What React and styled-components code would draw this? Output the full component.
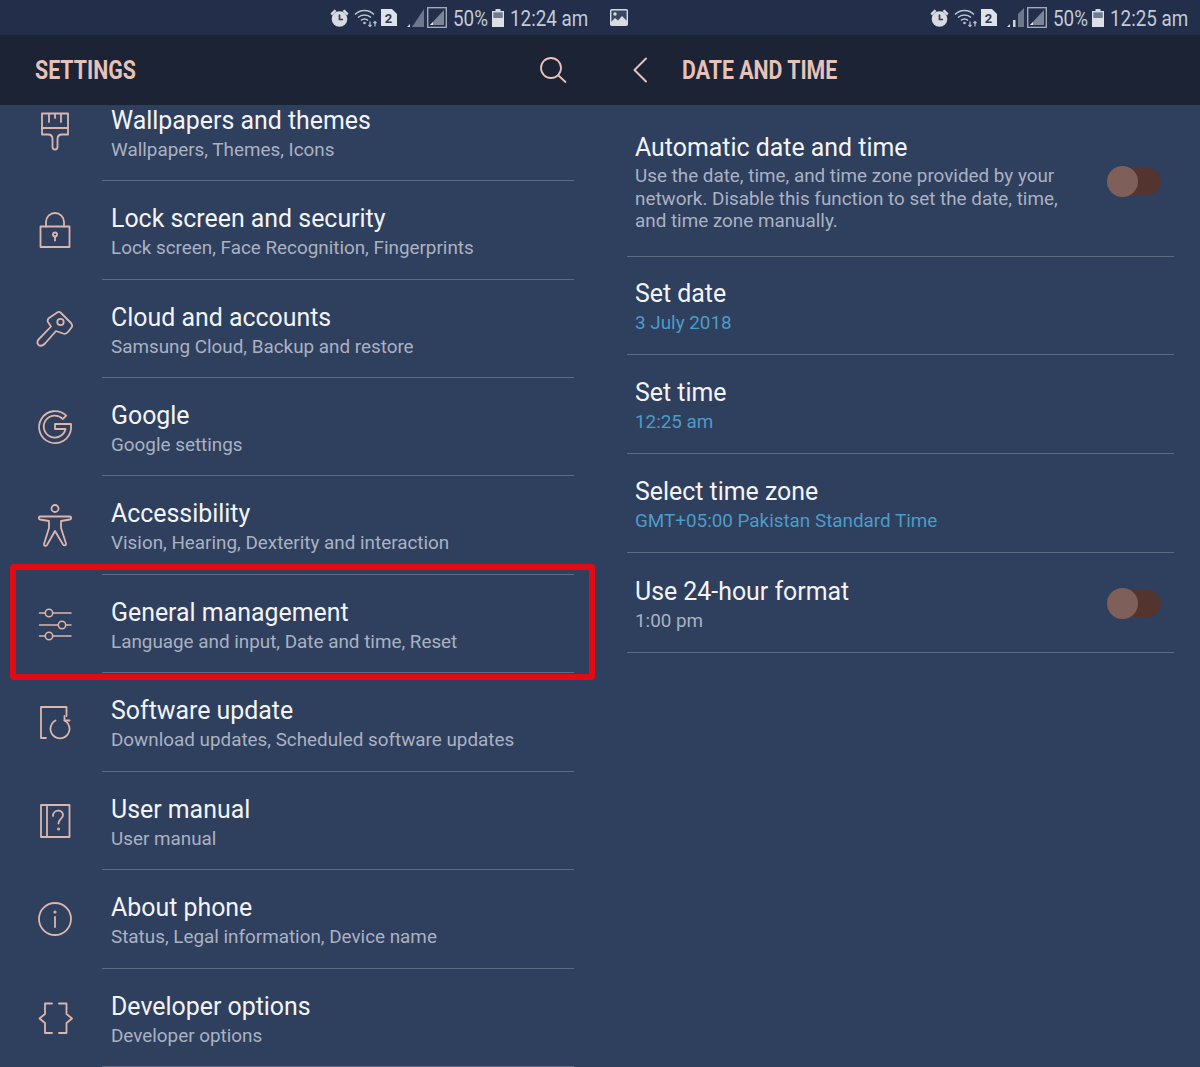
import React from "react";
import styled, { createGlobalStyle } from "styled-components";

const Global = createGlobalStyle`
  html, body { margin: 0; padding: 0; background: #2f3f5e; }
  body { font-family: Roboto, "Liberation Sans", sans-serif; }
`;

const Page = styled.div`
  position: relative;
  width: 1200px;
  height: 1067px;
  display: grid;
  grid-template-columns: 600px 600px;
  overflow: hidden;
  background: #2f3f5e;
`;
const Panel = styled.section`
  display: flex;
  flex-direction: column;
  height: 1067px;
  min-width: 0;
`;
const StatusBar = styled.div`
  flex: 0 0 35px;
  height: 35px;
  background: #222e4a;
  display: flex;
  align-items: center;
  padding: 0 12px 0 10px;
`;
const Spacer = styled.div`
  flex: 1;
`;
const StatusText = styled.span`
  display: block;
  flex: none;
  width: ${(p) => p.$w}px;
  font-size: 22px;
  line-height: 37px;
  height: 35px;
  color: #c3cad6;
  margin-left: ${(p) => p.$ml || 0}px;
  white-space: nowrap;
  transform: scaleX(0.855);
  transform-origin: left center;
`;
const StatusIcon = styled.svg`
  display: block;
  flex: none;
  margin-left: ${(p) => p.$ml || 0}px;
`;
const Header = styled.header`
  flex: 0 0 70px;
  height: 70px;
  background: #1b2335;
  display: flex;
  align-items: center;
  padding: 0 ${(p) => (p.$detail ? 32 : 33)}px 0 ${(p) => (p.$detail ? 32 : 35)}px;
  position: relative;
  z-index: 1;
`;
const HeaderTitle = styled.h1`
  margin: 0 0 0 ${(p) => p.$ml || 0}px;
  font-size: 25px;
  font-weight: 700;
  line-height: 72px;
  height: 70px;
  color: #e6c2b9;
  white-space: nowrap;
  transform: scaleX(0.853);
  transform-origin: left center;
`;
const ListClip = styled.div`
  flex: 1;
  overflow: hidden;
`;
const MenuList = styled.div`
  margin-top: -22.3px;
`;
const MenuRow = styled.div`
  height: 98.45px;
  box-sizing: border-box;
  display: flex;
  align-items: stretch;
`;
const IconCell = styled.div`
  flex: 0 0 102px;
  display: flex;
  align-items: center;
  justify-content: center;
  padding-left: 8px;
  box-sizing: border-box;
`;
const MenuBody = styled.div`
  width: 472px;
  box-sizing: border-box;
  padding: 21px 0 0 9px;
  border-bottom: 1px solid #5d6b85;
`;
const Title = styled.div`
  font-size: 24.9px;
  line-height: 33px;
  color: #f3f4f6;
  white-space: nowrap;
`;
const Sub = styled.div`
  font-size: 18.85px;
  line-height: 25px;
  margin-top: 1px;
  color: ${(p) => (p.$accent ? "#4c9cc7" : "#aab2c2")};
  white-space: nowrap;
`;
const DetailList = styled.div`
  padding-left: 27px;
  width: 547px;
`;
const DetailRow = styled.div`
  height: ${(p) => p.$h}px;
  box-sizing: border-box;
  border-bottom: 1px solid #5d6b85;
  padding: ${(p) => p.$pt}px 13px 0 8px;
  display: flex;
  align-items: flex-start;
`;
const DetailText = styled.div`
  flex: 1;
  min-width: 0;
`;
const Description = styled.div`
  font-size: 18.85px;
  line-height: 22.5px;
  margin-top: 1px;
  color: #aab2c2;
  width: 440px;
`;
const SwitchTrack = styled.div`
  position: relative;
  flex: none;
  width: 53px;
  height: 27px;
  margin-top: ${(p) => p.$mt}px;
  border-radius: 14px;
  background: #53342f;
`;
const SwitchKnob = styled.div`
  position: absolute;
  left: -1px;
  top: -2px;
  width: 31px;
  height: 31px;
  border-radius: 50%;
  background: #7f5f5a;
`;
const Highlight = styled.div`
  position: absolute;
  left: 10px;
  top: 564px;
  width: 585px;
  height: 116px;
  box-sizing: border-box;
  border: 6px solid #e30b13;
  border-radius: 4px;
  pointer-events: none;
`;

const stroke = { fill: "none", stroke: "#dcb6ad", strokeWidth: 1.8, strokeLinecap: "round", strokeLinejoin: "round" };
const Ic = ({ children, w = 40, h = 48 }) => (
  <svg width={w} height={h} viewBox={`0 0 ${w} ${h}`} {...stroke}>{children}</svg>
);

const Brush = () => (
  <Ic>
    <path d="M7 5.500h26v21h-6c-3 0-4.500 2-4.500 4.500v8a2.500 2.500 0 0 1-5 0v-8c0-2.500-1.500-4.500-4.500-4.500H7z"/>
    <path d="M7 20h26M14 6v8M20 6v4M26 6v8"/>
  </Ic>
);
const Lock = () => (
  <Ic>
    <rect x="5.500" y="20.500" width="29" height="20.500" />
    <path d="M11 20.500v-4.500a9 9 0 0 1 18 0v4.500"/>
    <circle cx="20" cy="28.500" r="2"/>
    <path d="M20 30.500v4"/>
  </Ic>
);
const Key = () => (
  <Ic>
    <path d="M23 7Q24.500 6.500 26 8L36 18Q38 20.500 36.500 22.500L33 27Q31 29.500 28 28.500L21 26 10 38.500Q6.500 42 3.500 40 1 37 4 34L16 21.500 13 17Q12 15 14 13z"/>
    <circle cx="25.500" cy="17" r="3.200"/>
  </Ic>
);
const GoogleG = () => (
  <Ic>
    <path d="M31.300 12.700A16 16 0 1 0 36 26V21H20V26H30.500A11 11 0 1 1 27.700 16z"/>
  </Ic>
);
const Person = () => (
  <Ic>
    <circle cx="20" cy="6.500" r="3.500"/>
    <path d="M5 14.500h30c1.500 0 1.500 3 0 3l-9 1.500v7l5 15.500c.5 2-2 2.500-3 1L20 29l-8 14c-1 1.500-3.500 1-3-1l5-16v-7l-9-1.500c-1.500-.3-1.500-3 0-3z"/>
  </Ic>
);
const Sliders = () => (
  <Ic>
    <g strokeWidth="1.500">
      <path d="M4.500 13h5.500M18 13h18M4.500 25h18.500M31 25h5M4.500 36h5.500M18 36h18"/>
      <circle cx="14" cy="13" r="3.700"/>
      <circle cx="27" cy="25" r="3.700"/>
      <circle cx="14" cy="36" r="3.700"/>
    </g>
  </Ic>
);
const Update = () => (
  <Ic>
    <path d="M11 39H6V8h25.500v9"/>
    <path d="M20.500 21.500A9.500 9.500 0 1 0 29.500 21.500"/>
    <path d="M29.500 17v4.500H34.500"/>
  </Ic>
);
const Manual = () => (
  <Ic>
    <rect x="6" y="8" width="28.500" height="32"/>
    <path d="M12 8v32"/>
    <path d="M18 19c0-7 10-7 10-1 0 4-4.500 4-4.500 8.500"/>
    <circle cx="23.500" cy="32" r=".6"/>
  </Ic>
);
const Info = () => (
  <Ic>
    <circle cx="20" cy="24" r="16"/>
    <path d="M20 22v10"/>
    <circle cx="20" cy="17" r=".7"/>
  </Ic>
);
const Braces = () => (
  <Ic>
    <path d="M17 9.500H10v10.500L4.500 24.500 10 29v10h7"/>
    <path d="M24 9.500h7.500v10.500l5.500 4.500L31.500 29v10H24"/>
  </Ic>
);
const Search = () => (
  <svg width="28" height="28" viewBox="0 0 28 28" fill="none" stroke="#e6c2b9" strokeWidth="1.800" strokeLinecap="round">
    <circle cx="12" cy="12" r="10"/>
    <path d="M19.500 19.500l7 6.500"/>
  </svg>
);
const Back = () => (
  <svg width="16" height="26" viewBox="0 0 16 26" fill="none" stroke="#e6c2b9" strokeWidth="2" strokeLinecap="round" strokeLinejoin="round">
    <path d="M14 1.500L2.500 13 14 24.500"/>
  </svg>
);

const Alarm = () => (
  <StatusIcon width="19" height="20" viewBox="0 0 19 20">
    <circle cx="9.500" cy="11" r="7.800" fill="#d8dbe0"/>
    <path d="M0.500 5.500L4.500 1.500 6.500 3 2 7.500z" fill="#d8dbe0"/>
    <path d="M18.500 5.500L14.500 1.500 12.500 3 17 7.500z" fill="#d8dbe0"/>
    <path d="M9.500 6.500v5h3.500" stroke="#333f58" strokeWidth="1.700" fill="none"/>
  </StatusIcon>
);
const Wifi = () => (
  <StatusIcon width="24" height="20" viewBox="0 0 24 20" $ml={5} fill="none" stroke="#bcc3cf" strokeWidth="1.500">
    <path d="M1 6.500c5-5.500 14-5.500 19 0"/>
    <path d="M4 9.500c3.500-3.500 9.500-3.500 13 0"/>
    <path d="M7 12.500c2-2 5-2 7 0"/>
    <circle cx="10.500" cy="15" r="1.300" fill="#bcc3cf" stroke="none"/>
    <path d="M16 13.500v5M14.500 17l1.500 1.500 1.500-1.500M21 18.500v-5M19.500 15l1.500-1.500 1.500 1.500" strokeWidth="1.200"/>
  </StatusIcon>
);
const Sim = () => (
  <StatusIcon width="16" height="17" viewBox="0 0 16 17" $ml={3}>
    <path d="M0 0h11l5 5v12H0z" fill="#dfe2e7"/>
    <text x="7.500" y="13.500" fontSize="13" fontWeight="700" fontFamily="Roboto, sans-serif" textAnchor="middle" fill="#2b3650">2</text>
  </StatusIcon>
);
const Signal = ({ bars }) => (
  <StatusIcon width="17" height="19" viewBox="0 0 17 19" $ml={10}>
    {bars ? (
      <g>
        <path d="M0 19l3-3v3z" fill="#d5d9e0"/>
        <rect x="6" y="12" width="2.500" height="7" fill="#cfd4dc"/>
        <path d="M11 6l6-6v19h-6z" fill="#6d788c"/>
      </g>
    ) : (
      <g>
        <path d="M5 19L17 1v18z" fill="#6d788c"/>
        <path d="M0 19l3-3v3z" fill="#d5d9e0"/>
      </g>
    )}
  </StatusIcon>
);
const Sim2 = () => (
  <StatusIcon width="20" height="21" viewBox="0 0 20 21" $ml={3}>
    <rect x=".7" y=".7" width="18.600" height="19.600" fill="none" stroke="#aab2c0" strokeWidth="1.300"/>
    <path d="M17 3v15H3z" fill="#7b8698"/>
    <path d="M3 18l3-3v3z" fill="#e0e3e8"/>
  </StatusIcon>
);
const Battery = () => (
  <StatusIcon width="12" height="18" viewBox="0 0 12 18" $ml={5}>
    <rect x="3.500" y="0" width="5" height="2" fill="#d5d9e0"/>
    <rect x="0" y="2" width="12" height="16" fill="#dcdfe4"/>
    <rect x="1.300" y="3.300" width="9.400" height="5.700" fill="#6f7a8d"/>
  </StatusIcon>
);
const Picture = () => (
  <StatusIcon width="18" height="17" viewBox="0 0 18 17">
    <rect x=".7" y=".7" width="16.600" height="15.600" rx="1" fill="#3a4662" stroke="#d8dbe0" strokeWidth="1.400"/>
    <circle cx="5" cy="5" r="1.700" fill="#d8dbe0"/>
    <path d="M1 13l4-4 3 2.500L12 7l5 5v4H1z" fill="#d8dbe0"/>
  </StatusIcon>
);

const Status = ({ time, picture, bars }) => (
  <StatusBar>
    {picture && <Picture />}
    <Spacer />
    <Alarm />
    <Wifi />
    <Sim />
    <Signal bars={bars} />
    <Sim2 />
    <StatusText $ml={6} $w={34}>50%</StatusText>
    <Battery />
    <StatusText $ml={6} $w={78}>{time}</StatusText>
  </StatusBar>
);

const menu = [
  [Brush, "Wallpapers and themes", "Wallpapers, Themes, Icons"],
  [Lock, "Lock screen and security", "Lock screen, Face Recognition, Fingerprints"],
  [Key, "Cloud and accounts", "Samsung Cloud, Backup and restore"],
  [GoogleG, "Google", "Google settings"],
  [Person, "Accessibility", "Vision, Hearing, Dexterity and interaction"],
  [Sliders, "General management", "Language and input, Date and time, Reset"],
  [Update, "Software update", "Download updates, Scheduled software updates"],
  [Manual, "User manual", "User manual"],
  [Info, "About phone", "Status, Legal information, Device name"],
  [Braces, "Developer options", "Developer options"],
];

export default function App() {
  return (
    <Page>
      <Global />
      <Panel>
        <Status time="12:24 am" />
        <Header>
          <HeaderTitle>SETTINGS</HeaderTitle>
          <Spacer />
          <Search />
        </Header>
        <ListClip>
          <MenuList>
            {menu.map(([Icon, title, sub]) => (
              <MenuRow key={title}>
                <IconCell><Icon /></IconCell>
                <MenuBody>
                  <Title>{title}</Title>
                  <Sub>{sub}</Sub>
                </MenuBody>
              </MenuRow>
            ))}
          </MenuList>
        </ListClip>
      </Panel>
      <Panel>
        <Status time="12:25 am" picture bars />
        <Header $detail>
          <Back />
          <HeaderTitle $ml={34}>DATE AND TIME</HeaderTitle>
        </Header>
        <DetailList>
          <DetailRow $h={151.5} $pt={26}>
            <DetailText>
              <Title>Automatic date and time</Title>
              <Description>Use the date, time, and time zone provided by your network. Disable this function to set the date, time, and time zone manually.</Description>
            </DetailText>
            <SwitchTrack $mt={37}><SwitchKnob /></SwitchTrack>
          </DetailRow>
          <DetailRow $h={98} $pt={20}>
            <DetailText>
              <Title>Set date</Title>
              <Sub $accent>3 July 2018</Sub>
            </DetailText>
          </DetailRow>
          <DetailRow $h={99} $pt={21}>
            <DetailText>
              <Title>Set time</Title>
              <Sub $accent>12:25 am</Sub>
            </DetailText>
          </DetailRow>
          <DetailRow $h={99} $pt={21}>
            <DetailText>
              <Title>Select time zone</Title>
              <Sub $accent>GMT+05:00 Pakistan Standard Time</Sub>
            </DetailText>
          </DetailRow>
          <DetailRow $h={100} $pt={22}>
            <DetailText>
              <Title>Use 24-hour format</Title>
              <Sub>1:00 pm</Sub>
            </DetailText>
            <SwitchTrack $mt={15}><SwitchKnob /></SwitchTrack>
          </DetailRow>
        </DetailList>
      </Panel>
      <Highlight />
    </Page>
  );
}
